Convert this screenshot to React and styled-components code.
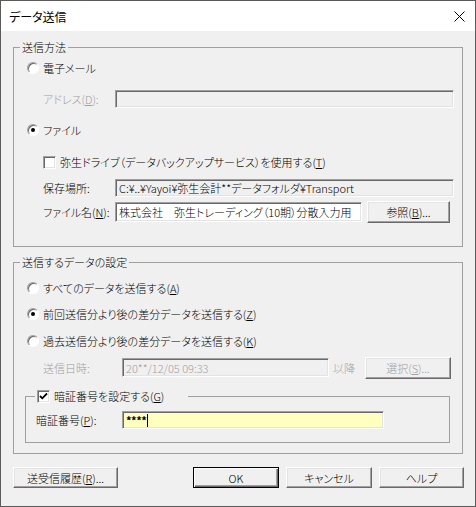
import React from "react"
import styled, { createGlobalStyle, css } from "styled-components"

const GlobalStyle = createGlobalStyle`
  html, body {
    margin: 0;
    padding: 0;
    background: #f0f0f0;
  }
  body {
    font-family: "Noto Sans CJK JP", "Noto Sans", sans-serif;
    font-size: 11px;
    font-weight: 300;
    font-feature-settings: "palt";
    color: #000;
  }
  * {
    box-sizing: border-box;
  }
`

export default function App() {
  return (
    <>
      <GlobalStyle />
      <Window>
        <TitleBar>
          <span>データ送信</span>
          <svg width="11" height="11" viewBox="0 0 11 11">
            <path d="M0.5 0.5 L10.5 10.5 M10.5 0.5 L0.5 10.5" stroke="#000" strokeWidth="1" />
          </svg>
        </TitleBar>

        <Body>
          <Group>
            <Legend>送信方法</Legend>
            <Content $pt={3} $pb={23}>
              <Row>
                <Radio />
                <span>電子メール</span>
              </Row>
              <Row $mt={12} $h={18}>
                <Label $w={72} $disabled>
                  アドレス(<u>D</u>):
                </Label>
                <Field $bg="#f0f0f0" />
              </Row>
              <Row $mt={12}>
                <Radio $on />
                <span>ファイル</span>
              </Row>
              <Row $mt={12}>
                <Check $indent={16} />
                <span>
                  弥生ドライブ（データバックアップサービス）を使用する(<u>T</u>)
                </span>
              </Row>
              <Row $mt={7} $h={18}>
                <Label $w={72}>保存場所:</Label>
                <Field $bg="#f0f0f0">C:¥..¥Yayoi¥弥生会計**データフォルダ¥Transport</Field>
              </Row>
              <Row $mt={4} $h={22}>
                <Label $w={72}>
                  ファイル名(<u>N</u>):
                </Label>
                <Field $w={247} $h={20}>
                  株式会社　弥生トレーディング（10期）分散入力用
                </Field>
                <Button $w={83} style={{ marginLeft: 5 }}>
                  参照(<u>B</u>)...
                </Button>
              </Row>
            </Content>
          </Group>

          <Group $mt={7}>
            <Legend>送信するデータの設定</Legend>
            <Content $pt={8} $pb={10}>
              <Row>
                <Radio />
                <span>
                  すべてのデータを送信する(<u>A</u>)
                </span>
              </Row>
              <Row $mt={6}>
                <Radio $on />
                <span>
                  前回送信分より後の差分データを送信する(<u>Z</u>)
                </span>
              </Row>
              <Row $mt={7}>
                <Radio />
                <span>
                  過去送信分より後の差分データを送信する(<u>K</u>)
                </span>
              </Row>
              <Row $mt={6} $h={21}>
                <Label $w={79} $disabled>
                  送信日時:
                </Label>
                <Field $w={207} $h={19} $bg="#f0f0f0" $disabled>
                  20**/12/05 09:33
                </Field>
                <After>以降</After>
                <Button $w={86} $disabled>
                  選択(<u>S</u>)...
                </Button>
              </Row>

              <SubGroup>
                <SubLegend>
                  <Check $on />
                  <span>
                    暗証番号を設定する(<u>G</u>)
                  </span>
                </SubLegend>
                <Content $pt={7} $pb={13} $pl={10}>
                  <Row $h={18}>
                    <Label $w={86} $plain>
                      暗証番号(<u>P</u>):
                    </Label>
                    <Field $w={262} $bg="#ffffbf">
                      <Stars>****</Stars>
                      <Caret />
                    </Field>
                  </Row>
                </Content>
              </SubGroup>
            </Content>
          </Group>

          <Footer>
            <Button $w={105} $h={21}>
              送受信履歴(<u>R</u>)...
            </Button>
            <Spacer />
            <Button $w={86} $h={21} $default>
              OK
            </Button>
            <Button $w={86} $h={21}>
              キャンセル
            </Button>
            <Button $w={85} $h={21}>
              ヘルプ
            </Button>
          </Footer>
        </Body>
      </Window>
    </>
  )
}

function Radio({ $on }) {
  return <RadioMark $on={$on} />
}

function Check({ $on, $indent }) {
  return (
    <CheckMark $indent={$indent}>
      {$on && (
        <svg width="9" height="9" viewBox="0 0 9 9">
          <polyline points="1,4 3.3,6.3 8,1.5" fill="none" stroke="#000" strokeWidth="1.8" />
        </svg>
      )}
    </CheckMark>
  )
}

const Window = styled.div`
  width: 476px;
  height: 507px;
  border: 1px solid #5a5a5a;
  background: #f0f0f0;
  display: flex;
  flex-direction: column;
`
const TitleBar = styled.div`
  height: 30px;
  background: #fff;
  display: flex;
  align-items: center;
  justify-content: space-between;
  padding: 0 10px 0 8px;
  font-size: 12px;
  font-weight: 400;
`
const Body = styled.div`
  padding: 8px 11px 0 12px;
  display: flex;
  flex-direction: column;
`
const Group = styled.fieldset`
  width: 450px;
  margin: ${(p) => p.$mt || 0}px 0 0 0;
  padding: 0;
  border: 1px solid #a0a0a0;
  min-width: 0;
`
const Legend = styled.legend`
  margin-left: 6px;
  padding: 0 2px;
  height: 16px;
  line-height: 16px;
`
const Content = styled.div`
  display: flex;
  flex-direction: column;
  padding: ${(p) => p.$pt || 0}px 8px ${(p) => p.$pb || 0}px ${(p) => p.$pl || 13}px;
`
const Row = styled.div`
  display: flex;
  align-items: center;
  height: ${(p) => p.$h || 20}px;
  margin-top: ${(p) => p.$mt || 0}px;
  white-space: nowrap;
`
const RadioMark = styled.span`
  position: relative;
  flex: none;
  width: 12px;
  height: 12px;
  margin-right: 4px;
  border-radius: 50%;
  background: #fff;
  border: 1px solid;
  border-color: #a0a0a0 #fff #fff #a0a0a0;
  box-shadow: inset 1px 1px 0 #696969;
  ${(p) =>
    p.$on &&
    css`
      &::after {
        content: "";
        position: absolute;
        left: 3px;
        top: 3px;
        width: 4px;
        height: 4px;
        border-radius: 50%;
        background: #000;
      }
    `}
`
const CheckMark = styled.span`
  flex: none;
  width: 13px;
  height: 13px;
  margin-left: ${(p) => p.$indent || 0}px;
  margin-right: 4px;
  background: #fff;
  border: 1px solid;
  border-color: #a0a0a0 #fff #fff #a0a0a0;
  box-shadow: inset 1px 1px 0 #696969, inset -1px -1px 0 #e3e3e3;
  display: inline-flex;
  align-items: center;
  justify-content: center;
`
const Label = styled.span`
  flex: none;
  width: ${(p) => p.$w}px;
  margin-left: ${(p) => (p.$plain ? 0 : 16)}px;
  color: ${(p) => (p.$disabled ? "#a0a0a0" : "#000")};
`
const Field = styled.div`
  flex: ${(p) => (p.$w ? "none" : "1")};
  width: ${(p) => (p.$w ? `${p.$w}px` : "auto")};
  height: ${(p) => p.$h || 18}px;
  background: ${(p) => p.$bg || "#fff"};
  color: ${(p) => (p.$disabled ? "#a0a0a0" : "#000")};
  border: 1px solid;
  border-color: #a0a0a0 #fff #fff #a0a0a0;
  box-shadow: inset 1px 1px 0 #696969, inset -1px -1px 0 #e3e3e3;
  padding: 0 3px;
  display: flex;
  align-items: center;
  white-space: nowrap;
  overflow: hidden;
`
const Stars = styled.span`
  font-weight: bold;
  letter-spacing: -0.5px;
`
const Caret = styled.span`
  width: 1px;
  height: 13px;
  margin-left: 1px;
  background: #000;
`
const After = styled.span`
  width: 36px;
  padding-left: 4px;
  color: #a0a0a0;
`
const Button = styled.button`
  flex: none;
  width: ${(p) => p.$w}px;
  height: ${(p) => p.$h || 22}px;
  padding: 0;
  font: inherit;
  font-feature-settings: "palt";
  color: ${(p) => (p.$disabled ? "#a0a0a0" : "#000")};
  background: #f0f0f0;
  border: 1px solid;
  border-color: #fff #696969 #696969 #fff;
  box-shadow: inset -1px -1px 0 #a0a0a0, inset 1px 1px 0 #e3e3e3;
  ${(p) =>
    p.$default &&
    css`
      border-color: #000;
      box-shadow: inset 1px 1px 0 #fff, inset -1px -1px 0 #696969, inset -2px -2px 0 #a0a0a0;
    `}
`
const SubGroup = styled.fieldset`
  margin: 10px 4px 0 -2px;
  padding: 0;
  border: 1px solid #a0a0a0;
  min-width: 0;
`
const SubLegend = styled.legend`
  margin-left: 9px;
  padding: 0 24px 0 2px;
  height: 16px;
  display: flex;
  align-items: center;
`
const Footer = styled.div`
  display: flex;
  gap: 7px;
  margin-top: 13px;
`
const Spacer = styled.div`
  flex: 1;
`
